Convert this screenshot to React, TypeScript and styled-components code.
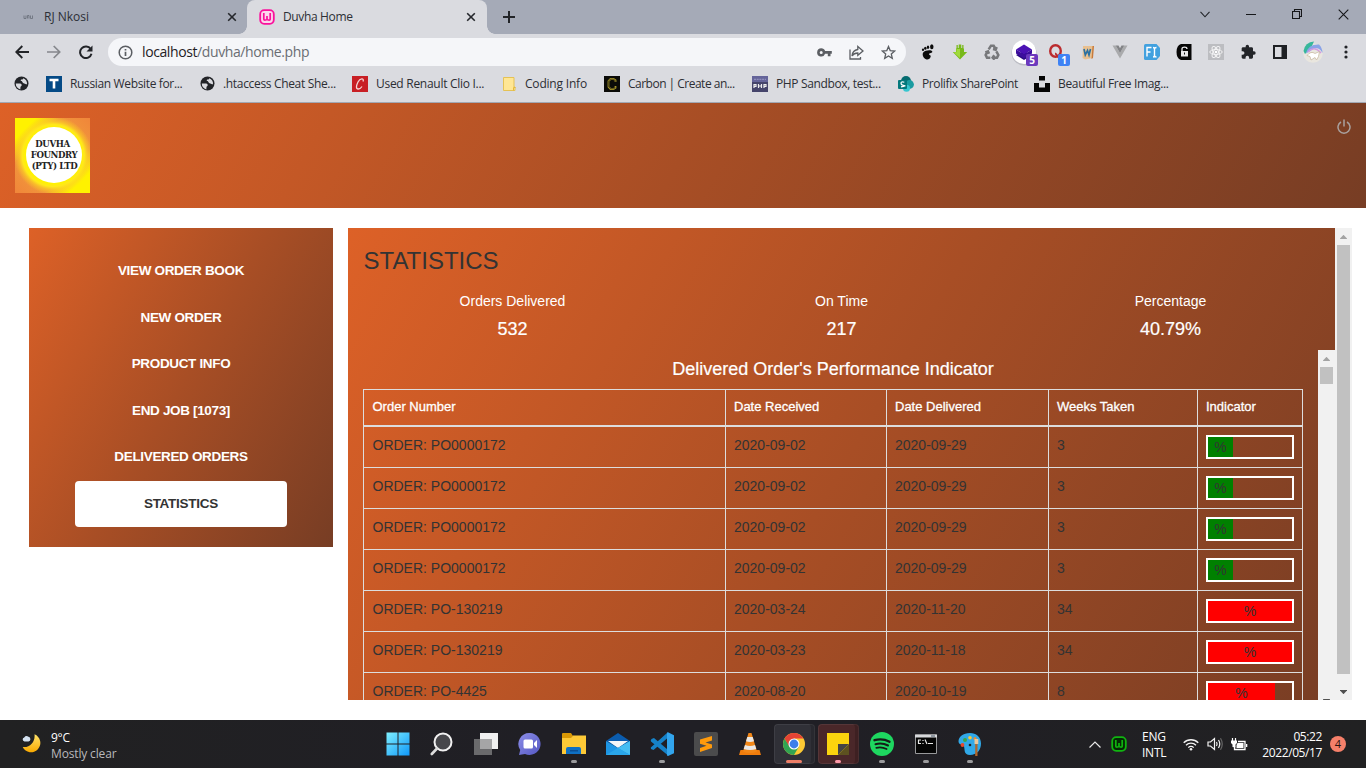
import React from "react";
import styled, { createGlobalStyle } from "styled-components";

const Global = createGlobalStyle`
  * { box-sizing: border-box; }
  body { margin: 0; background: #fff; overflow: hidden; }
  svg { display: block; flex: none; }
`;

const ui = `"Open Sans", "Noto Sans", sans-serif`;
const arial = `"Liberation Sans", Arial, sans-serif`;
const rust = `linear-gradient(120deg, #dd6127 0%, #a84e25 50%, #773d24 100%)`;

const Screen = styled.div`
  width: 1366px;
  height: 768px;
  display: flex;
  flex-direction: column;
  overflow: hidden;
`;

/* ---------- browser frame ---------- */
const TabStrip = styled.div`
  height: 34px;
  background: #a5aab7;
  display: flex;
  font: 12px/34px ${ui};
  color: #2c2f36;
`;
const Tab = styled.div<{ $active?: boolean; $w: number }>`
  position: relative;
  width: ${(p) => p.$w}px;
  height: 34px;
  display: flex;
  align-items: center;
  padding: 0 ${(p) => (p.$active ? 11 : 10)}px 0 ${(p) => (p.$active ? 12 : 20)}px;
  background: ${(p) => (p.$active ? "#dadbe0" : "transparent")};
  border-radius: 8px 8px 0 0;
  &::before,
  &::after {
    content: "";
    display: ${(p) => (p.$active ? "block" : "none")};
    position: absolute;
    bottom: 0;
    width: 8px;
    height: 8px;
  }
  &::before {
    left: -8px;
    background: radial-gradient(circle at 0 0, transparent 7.5px, #dadbe0 8px);
  }
  &::after {
    right: -8px;
    background: radial-gradient(circle at 100% 0, transparent 7.5px, #dadbe0 8px);
  }
`;
const TabTitle = styled.span<{ $s?: number }>`
  flex: 1;
  margin-left: 8px;
  letter-spacing: ${(p) => p.$s ?? 0}px;
  white-space: nowrap;
`;
const NewTab = styled.div`
  width: 44px;
  display: flex;
  align-items: center;
  justify-content: center;
`;
const WindowButtons = styled.div`
  margin-left: auto;
  display: flex;
  height: 28px;
`;
const WindowButton = styled.div<{ $w: number }>`
  width: ${(p) => p.$w}px;
  display: flex;
  align-items: center;
  justify-content: center;
`;

const Toolbar = styled.div`
  height: 37px;
  background: #dadbe0;
  display: flex;
  align-items: center;
  padding: 0 5px 1px 6px;
`;
const ToolCell = styled.div<{ $w?: number }>`
  position: relative;
  width: ${(p) => p.$w ?? 32}px;
  height: 32px;
  display: flex;
  align-items: center;
  justify-content: center;
  flex: none;
`;
const AddressBar = styled.div`
  flex: 1;
  height: 28px;
  margin: 0 6px 0 6px;
  border-radius: 14px;
  background: #f5f6f9;
  display: flex;
  align-items: center;
  padding: 0 2px 0 10px;
`;
const Url = styled.div`
  flex: 1;
  margin-left: 9px;
  font: 14px/28px ${ui};
  letter-spacing: -0.4px;
  color: #6a6d73;
  b {
    font-weight: 400;
    color: #1f2125;
  }
`;
const CountBadge = styled.span<{ $c: string }>`
  position: absolute;
  right: 2px;
  bottom: 2px;
  width: 12px;
  height: 12px;
  border-radius: 2px;
  background: ${(p) => p.$c};
  color: #fff;
  font: 700 10px/12px ${ui};
  text-align: center;
`;

const Bookmarks = styled.div`
  height: 32px;
  background: #dadbe0;
  border-bottom: 1px solid #a2a8b3;
  padding: 0 0 6px 14px;
  display: flex;
  align-items: center;
`;
const Bookmark = styled.div<{ $w: number; $s?: number }>`
  width: ${(p) => p.$w}px;
  display: flex;
  align-items: center;
  gap: 8px;
  flex: none;
  white-space: nowrap;
  font: 12px/26px ${ui};
  letter-spacing: ${(p) => p.$s ?? -0.2}px;
  color: #2c2e34;
`;

/* ---------- web page ---------- */
const SiteHeader = styled.header`
  height: 105px;
  background: ${rust};
  padding: 15px;
  display: flex;
  justify-content: space-between;
`;
const Logo = styled.div`
  width: 75px;
  height: 75px;
  padding: 8.5px 8.5px 9px 11px;
  background:
    radial-gradient(circle at 51% 50%, #fff200 0 28px, #ffe81a 31px, rgba(255, 220, 30, 0.55) 34px, rgba(255, 190, 50, 0) 39px),
    linear-gradient(135deg, #fff200 14%, transparent 30%, transparent 70%, #fff200 86%),
    linear-gradient(45deg, #f0853a, #f2a93c 45%, #f2a93c 55%, #f0853a);
`;
const LogoDisc = styled.div`
  width: 56px;
  height: 56.5px;
  border-radius: 50%;
  background: #fff;
  display: flex;
  flex-direction: column;
  align-items: center;
  justify-content: center;
  font: 700 8.6px/10.8px "DejaVu Serif", serif;
  letter-spacing: -0.4px;
  color: #222;
  white-space: nowrap;
  padding-top: 1px;
`;
const LogoLine = styled.span<{ $dx?: number }>`
  margin-left: ${(p) => p.$dx ?? 0}px;
`;
const PageBody = styled.main`
  height: 512px;
  padding: 20px 14px 20px 29px;
  display: flex;
  gap: 15px;
  align-items: flex-start;
  background: #fff;
`;
const SideNav = styled.nav`
  width: 304px;
  height: 319px;
  padding: 20px 46px;
  background: ${rust};
  flex: none;
`;
const NavItem = styled.div<{ $active?: boolean }>`
  height: ${(p) => (p.$active ? 46 : 46.5)}px;
  border-radius: 4px;
  background: ${(p) => (p.$active ? "#fff" : "transparent")};
  color: ${(p) => (p.$active ? "#333" : "#fff")};
  font: 700 13.5px/45px ${arial};
  letter-spacing: ${(p) => (p.$active ? -0.25 : -0.34)}px;
  text-align: center;
`;
const Panel = styled.section`
  width: 1004px;
  height: 472px;
  display: flex;
  overflow: hidden;
`;
const PanelContent = styled.div`
  width: 987px;
  height: 482px;
  background: ${rust};
  flex: none;
  color: #333;
  font-family: ${arial};
`;
const Heading = styled.h1`
  margin: 0;
  padding: 20px 15px 0 15.5px;
  font: 400 24px/26px ${arial};
  height: 63px;
`;
const Figures = styled.div`
  display: grid;
  grid-template-columns: repeat(3, 1fr);
  height: 59px;
  color: #fff;
  text-align: center;
`;
const FigureLabel = styled.div`
  font-size: 14px;
  line-height: 20px;
`;
const FigureValue = styled.div`
  font-size: 18px;
  line-height: 20px;
  margin-top: 8px;
  -webkit-text-stroke: 0.2px #fff;
`;
const Scroller = styled.div`
  display: flex;
  height: 360px;
`;
const ScrollBody = styled.div`
  width: 970px;
  padding: 9px 15px 0;
  overflow: hidden;
`;
const TableTitle = styled.h2`
  margin: 0;
  height: 30px;
  font: 400 18px/20px ${arial};
  -webkit-text-stroke: 0.2px #fff;
  color: #fff;
  text-align: center;
`;
const Table = styled.div`
  border-top: 1px solid #ddd;
`;
const Row = styled.div<{ $head?: boolean }>`
  display: grid;
  grid-template-columns: 362px 161px 162px 149px 106px;
  height: ${(p) => (p.$head ? 37 : 41)}px;
  border-bottom: ${(p) => (p.$head ? 2 : 1)}px solid #ddd;
  font-size: ${(p) => (p.$head ? 13 : 14)}px;
  line-height: 20px;
  color: ${(p) => (p.$head ? "#fff" : "#333")};
  -webkit-text-stroke: ${(p) => (p.$head ? "0.3px #fff" : "0")};
`;
const Cell = styled.div<{ $head?: boolean }>`
  padding: ${(p) => (p.$head ? 7 : 8)}px 8px;
  border-left: 1px solid #ddd;
  &:first-child {
    padding-left: 8.5px;
  }
  &:last-child {
    border-right: 1px solid #ddd;
  }
`;
const Meter = styled.div`
  height: 24px;
  border: 2px solid #fff;
`;
const MeterFill = styled.div<{ $late: boolean }>`
  height: 20px;
  background: ${(p) => (p.$late ? "#f00" : "#008000")};
  text-align: center;
  line-height: 21px;
`;
const Track = styled.div<{ $h: number }>`
  width: 17px;
  height: ${(p) => p.$h}px;
  flex: none;
  background: #f1f1f1;
  display: flex;
  flex-direction: column;
  align-items: center;
`;
const ArrowBox = styled.div`
  height: 17px;
  display: flex;
  align-items: center;
  flex: none;
`;
const Thumb = styled.div<{ $h: number }>`
  width: 13px;
  height: ${(p) => p.$h}px;
  background: #c1c1c1;
`;
const Spacer = styled.div`
  flex: 1;
`;

/* ---------- taskbar ---------- */
const Taskbar = styled.footer`
  height: 48px;
  background: linear-gradient(90deg, #212122, #201f25 40%, #201f25 60%, #212122);
  display: flex;
  color: #fff;
  font: 12px/16px ${ui};
`;
const Weather = styled.div`
  width: 375px;
  padding: 9px 0 0 20px;
  display: flex;
  gap: 9px;
`;
const WeatherIcon = styled.div`
  padding-top: 3px;
`;
const WeatherText = styled.div`
  padding-top: 1px;
  letter-spacing: -0.25px;
  span {
    display: block;
    color: #b9b9bb;
    letter-spacing: -0.15px;
  }
`;
const Apps = styled.div`
  display: flex;
  padding-left: 0.5px;
`;
const AppButton = styled.div<{ $bg?: string }>`
  position: relative;
  width: 44px;
  height: 48px;
  display: flex;
  align-items: center;
  justify-content: center;
  &::before {
    content: "";
    position: absolute;
    inset: 4px 1px 4px 2px;
    border-radius: 4px;
    background: ${(p) => p.$bg ?? "transparent"};
    box-shadow: ${(p) => (p.$bg ? "inset -5px 0 0 -1px rgba(0,0,0,.16), inset 0 0 0 1px rgba(255,255,255,.07)" : "none")};
  }
  svg {
    position: relative;
  }
`;
const Running = styled.i<{ $w: number; $c: string }>`
  position: absolute;
  bottom: 5px;
  left: calc(50% - ${(p) => p.$w / 2}px);
  width: ${(p) => p.$w}px;
  height: 3px;
  border-radius: 2px;
  background: ${(p) => p.$c};
`;
const Tray = styled.div`
  margin-left: auto;
  display: flex;
  align-items: center;
  padding-right: 20px;
`;
const TrayCell = styled.div<{ $w: number }>`
  width: ${(p) => p.$w}px;
  display: flex;
  justify-content: center;
`;
const TrayText = styled.div<{ $w: number; $right?: boolean; $s?: number }>`
  width: ${(p) => p.$w}px;
  text-align: ${(p) => (p.$right ? "right" : "left")};
  letter-spacing: ${(p) => p.$s ?? 0}px;
  white-space: nowrap;
  line-height: 16px;
  padding-top: 1px;
`;
const Notice = styled.div`
  width: 16px;
  height: 16px;
  margin-left: 8px;
  border-radius: 50%;
  background: #f6806a;
  color: #2a1512;
  font-size: 11px;
  line-height: 16px;
  text-align: center;
`;

/* ---------- icons ---------- */
const Cross = () => (
  <svg width="10" height="10" viewBox="0 0 10 10" stroke="#25272c" strokeWidth="1.6"><path d="M1.2 1.2l7.6 7.6M8.8 1.2L1.2 8.8" /></svg>
);
const GlobeIcon = () => (
  <svg width="15" height="15" viewBox="0 0 15 15"><circle cx="7.5" cy="7.5" r="7" fill="#222428" /><path d="M1.8 7.600h4.400q1.600.2 1.500 1.600c-.1 1-1 1-1.200 1.800l-.2 2.400C3.600 12.800 1.700 10.700 1.800 7.600zM9.300 2.200q-.2 1.300-1.200 1.400c-1.300.1-1.400.3-1.300 1.200.1.700 1.300.5 1.600 1.200.3.900.9 1.400 1.900 1.400s1.200.9 2.700.9C13.400 5.500 11.700 3 9.300 2.200z" fill="#dadbe0" /></svg>
);
const WampIcon = ({ c, s = 16, bg = "none" }: { c: string; s?: number; bg?: string }) => (
  <svg width={s} height={s} viewBox="0 0 16 16" fill={bg} stroke={c}><rect x="1.200" y="1.200" width="13.600" height="13.600" rx="4" strokeWidth="1.800" /><path d="M4.800 4v6.200c0 1.200 2.200 1.200 2.200 0M11.200 4v6.200c0 1.200-2.200 1.200-2.200 0M8 7v4.500" fill="none" strokeWidth="1.700" /></svg>
);
const Arrow = ({ down, c = "#a3a3a3" }: { down?: boolean; c?: string }) => (
  <svg width="7" height="4" viewBox="0 0 7 4" fill={c}><path d={down ? "M0 0h7v.5L3.700 4h-.4L0 .5z" : "M0 4h7v-.5L3.700 0h-.4L0 3.500z"} /></svg>
);

const Extensions = () => (
  <>
    <ToolCell><svg width="14" height="16" viewBox="0 0 14 16" fill="#0b0b0b"><path d="M2.200 8.500C4 6 10.500 5.300 11.300 7.500c.5 1.700-3.500 1.400-3.300 2.700.1 1 2 .6 1.700 2.300C9.300 14.800 7 16 5 15.300 2.300 14.300.9 10.500 2.200 8.500z" /><ellipse cx="2" cy="5.800" rx="1.100" ry="1.300" /><ellipse cx="4.300" cy="4.200" rx="1.200" ry="1.500" /><ellipse cx="7" cy="3.300" rx="1.200" ry="1.700" /><ellipse cx="10.800" cy="2.700" rx="1.700" ry="2.500" /></svg></ToolCell>
    <ToolCell><svg width="16" height="16" viewBox="0 0 16 16"><path d="M4.500 1v3.500H4V8H.8L8 15.500 15.200 8H12V4.500h-.5V1h-1.300v3H9.300V.5H6.700V4h-.900V1z" fill="#78b91a" /><path d="M4.500 5h3.500v9L1.500 8.300h3z" fill="#a1da3c" /></svg></ToolCell>
    <ToolCell><svg width="16" height="16" viewBox="0 0 24 24" fill="none" stroke="#77787b" strokeWidth="3.800"><path d="M7 8l3.500-5.500h4L17 7M19 4.500l-1.500 4-4-1M18.500 11l3 5.500-2 4H14M15.500 17l-2.500 3.500 3 3M9.500 20.500H4.500l-2-4L5 11.500M2 12.500l4-1.500 1.500 3.500" /></svg></ToolCell>
    <ToolCell><svg width="30" height="30" viewBox="0 0 30 30"><circle cx="15" cy="16" r="12.500" fill="#9da0a8" opacity=".5" /><circle cx="15" cy="15" r="12" fill="#fff" /><path d="M15 10l8 4-8 5-8-5z" transform="translate(0 4)" fill="#2a0a80" /><path d="M15 7.500l8 5-8 5-8-5z" fill="#4b12b4" /><path d="M7 12.500l8 5 8-5v4l-8 5-8-5z" fill="#3c0e9d" /></svg><CountBadge $c="#6b39bd">5</CountBadge></ToolCell>
    <ToolCell><svg width="17" height="17" viewBox="0 0 17 17" fill="none" stroke="#bb2b2e"><ellipse cx="7.500" cy="7" rx="5.300" ry="5.800" strokeWidth="2.400" /><path d="M7 9.500c2 0 3 5.500 6 5" strokeWidth="2" /></svg><CountBadge $c="#3e82f4">1</CountBadge></ToolCell>
    <ToolCell><svg width="14" height="15" viewBox="0 0 14 15"><path d="M2 1h10.500l-.8 12L4 14.500 1.500 13z" fill="#e9c08f" /><path d="M11.500 1h1.500l-1 12-1.500 1z" fill="#c77a3c" /><path d="M3 4l1.300 6L6.500 5.500 8 10 9.500 4" fill="none" stroke="#2a70a2" strokeWidth="1.700" /></svg></ToolCell>
    <ToolCell><svg width="16" height="14" viewBox="0 0 16 14"><path d="M.5.5h3.200L8 8 12.300.5h3.200L8 13.500z" fill="#a9aaac" /><path d="M3.700.5h2.800L8 3.200 9.500.5h2.800L8 8z" fill="#828386" /></svg></ToolCell>
    <ToolCell><svg width="16" height="16" viewBox="0 0 16 16"><path d="M1.500 0h11L16 4v8l-3.500 4h-11Q0 16 0 14.500v-13Q0 0 1.500 0z" fill="#42a1df" /><path d="M3 12.500v-9h4.500M3 8h3.500M9 3.500q1.500 0 1.500 1.500v6.500q0 1.500-1.500 1.500M12.500 3.500q-2 0-2 1.500M12.500 13q-2 0-2-1.500" fill="none" stroke="#fff" strokeWidth="1.400" /></svg></ToolCell>
    <ToolCell><svg width="16" height="16" viewBox="0 0 16 16"><path d="M5 0h10.500v16H5Q.5 14.500.5 8T5 0z" fill="#060606" /><rect x="5" y="7" width="7" height="5.500" fill="#e7e7e9" /><path d="M6 7V4.700q0-1.500 2.500-1.500T11 5" fill="none" stroke="#e7e7e9" strokeWidth="1.300" /><path d="M8.500 8.500v2" stroke="#111" /></svg></ToolCell>
    <ToolCell><svg width="16" height="16" viewBox="0 0 16 16"><rect width="16" height="16" fill="#bcbdc1" /><g fill="none" stroke="#f3f3f4"><ellipse cx="8" cy="8" rx="6.200" ry="2.500" /><ellipse cx="8" cy="8" rx="6.200" ry="2.500" transform="rotate(60 8 8)" /><ellipse cx="8" cy="8" rx="6.200" ry="2.500" transform="rotate(120 8 8)" /></g><circle cx="8" cy="8" r="1.300" fill="#fff" /></svg></ToolCell>
    <ToolCell><svg width="16" height="16" viewBox="0 0 24 24" fill="#222428"><path d="M21 11h-1.500V7c0-1.100-.9-2-2-2h-4V3.500a2.500 2.500 0 0 0-5 0V5h-4c-1.100 0-2 .9-2 2v3.800H4a2.700 2.700 0 0 1 0 5.400H2.500V20c0 1.100.9 2 2 2h3.800v-1.500a2.700 2.700 0 0 1 5.400 0V22h3.800c1.100 0 2-.9 2-2v-4H21a2.500 2.500 0 0 0 0-5z" /></svg></ToolCell>
    <ToolCell><svg width="14" height="14" viewBox="0 0 14 14"><path d="M1 1h12v12H1z" fill="none" stroke="#1e2024" strokeWidth="2" /><path d="M8.500 0H14v14H8.500z" fill="#1e2024" /></svg></ToolCell>
    <ToolCell $w={34}><svg width="22" height="24" viewBox="0 0 22 24"><circle cx="11" cy="13" r="9.800" fill="#e9e6df" /><path d="M1.500 11Q3 2 12 1.500L9 8l-6 6z" fill="#37b79b" /><path d="M4 13.500Q6 4 17 4.500q3.500 3.500 3.500 8.500-3-6-8-4.500z" fill="#8aa3e8" /><path d="M6 12q6-7 13 1" fill="none" stroke="#d39be0" strokeWidth="1.500" /><path d="M5 15.500q4-5 8-2l4.500-2-1 5-2 3.500-1.500-2.500-4 2.500-1-3.500z" fill="#fff" stroke="#c6b59a" strokeWidth=".7" /></svg></ToolCell>
    <ToolCell $w={31}><svg width="4" height="14" viewBox="0 0 4 14" fill="#222428"><circle cx="2" cy="2" r="1.600" /><circle cx="2" cy="7" r="1.600" /><circle cx="2" cy="12" r="1.600" /></svg></ToolCell>
  </>
);

const BrowserFrame = () => (
  <>
    <TabStrip>
      <Tab $w={247}>
        <svg width="16" height="16" viewBox="0 0 16 16" fill="none" stroke="#646974"><path d="M4 6.500v3h2v-3M7.500 9.500v-3H9v3M10.500 6.500v3h2v-3" opacity=".75" /></svg>
        <TabTitle $s={0}>RJ Nkosi</TabTitle>
        <Cross />
      </Tab>
      <Tab $w={240} $active>
        <WampIcon c="#fa119c" bg="#fcd7ec" />
        <TabTitle $s={-0.36}>Duvha Home</TabTitle>
        <Cross />
      </Tab>
      <NewTab><svg width="12" height="12" viewBox="0 0 12 12" stroke="#222428" strokeWidth="2"><path d="M6 0v12M0 6h12" /></svg></NewTab>
      <WindowButtons>
        <WindowButton $w={46}><svg width="10" height="7" viewBox="0 0 10 7" fill="none" stroke="#222428" strokeWidth="1.100"><path d="M.5.800L5 5.800 9.500.8" /></svg></WindowButton>
        <WindowButton $w={46}><svg width="10" height="2" viewBox="0 0 10 2"><path d="M0 1h10v1H0z" fill="#16171a" /></svg></WindowButton>
        <WindowButton $w={46}><svg width="10" height="10" viewBox="0 0 10 10" fill="none" stroke="#16171a" strokeWidth="1.100"><path d="M.5 2.500h7v7h-7zM2.500 2.500v-2h7v7h-2" /></svg></WindowButton>
        <WindowButton $w={46}><svg width="11" height="11" viewBox="0 0 11 11" stroke="#16171a" strokeWidth="1.100"><path d="M.7.7l9.600 9.600M10.300.7L.7 10.300" /></svg></WindowButton>
      </WindowButtons>
    </TabStrip>
    <Toolbar>
      <ToolCell><svg width="14" height="14" viewBox="0 0 14 14" fill="none" stroke="#222428" strokeWidth="1.900"><path d="M14 7H1.500M7.300 1L1.300 7l6 6" /></svg></ToolCell>
      <ToolCell><svg width="14" height="14" viewBox="0 0 14 14" fill="none" stroke="#85878c" strokeWidth="1.700"><path d="M0 7h12.500M6.700 1l6 6-6 6" /></svg></ToolCell>
      <ToolCell><svg width="14" height="14" viewBox="0 0 14 14"><path d="M11.700 4A5.800 5.800 0 1 0 12.500 8.800" fill="none" stroke="#222428" strokeWidth="2" /><path d="M13.500.5v6h-6z" fill="#222428" /></svg></ToolCell>
      <AddressBar>
        <svg width="15" height="15" viewBox="0 0 15 15" fill="none" stroke="#5b5e63" strokeWidth="1.500"><circle cx="7.500" cy="7.500" r="6.300" /><path d="M7.500 6.700v4.200M7.500 4v1.600" strokeWidth="1.700" /></svg>
        <Url><b>localhost</b>/duvha/home.php</Url>
        <ToolCell><svg width="15" height="9" viewBox="0 0 15 9" fill="#5b5e63"><path fillRule="evenodd" d="M4.200.300a4.100 4.100 0 0 1 3.900 2.800H14.800v2.700H13.500V8.300h-2.700V5.800H8.100A4.100 4.100 0 1 1 4.200.3zm0 2.700a1.500 1.500 0 1 0 0 3 1.500 1.500 0 0 0 0-3z" /></svg></ToolCell>
        <ToolCell><svg width="15" height="15" viewBox="0 0 15 15" fill="none" stroke="#5b5e63" strokeWidth="1.300"><path d="M1 4.500V14h10.500v-2M8.800 1.500L14 6 8.800 10.300V8C6 8 4.300 9 3 11c.3-3.500 2.300-6 5.800-6.500z" /></svg></ToolCell>
        <ToolCell><svg width="15" height="15" viewBox="0 0 15 15" fill="none" stroke="#5b5e63" strokeWidth="1.300"><path d="M7.500 1.500l1.700 4.100 4.500.4-3.400 2.900 1 4.400-3.800-2.300-3.800 2.300 1-4.400L1.300 6l4.500-.4z" /></svg></ToolCell>
      </AddressBar>
      <Extensions />
    </Toolbar>
    <Bookmarks>
      <Bookmark $w={32}><GlobeIcon /></Bookmark>
      <Bookmark $w={154} $s={-0.35}><svg width="16" height="16" viewBox="0 0 16 16"><path d="M0 0h16v16H0z" fill="#044a86" /><path d="M3.500 4h9M8 4v8.500" stroke="#fff" strokeWidth="2.600" /></svg>Russian Website for...</Bookmark>
      <Bookmark $w={152} $s={-0.33}><GlobeIcon />.htaccess Cheat She...</Bookmark>
      <Bookmark $w={149} $s={-0.28}><svg width="16" height="16" viewBox="0 0 16 16"><path d="M0 0h16v16H0z" fill="#c81f25" /><path d="M11 5.500c1.500-3.500-3-3.500-5 .5s-2.200 7 .3 7c1.500 0 2.700-1 3.700-2.500" fill="none" stroke="#f4d5d5" strokeWidth="1.300" /></svg>Used Renault Clio I...</Bookmark>
      <Bookmark $w={103} $s={-0.2}><svg width="16" height="16" viewBox="0 0 16 16"><path d="M2.500 1.500h10.500v9.500h1v3.500H2.500z" fill="#ffe694" stroke="#e5c255" /><path d="M12.500 14.500v-3h2" fill="none" stroke="#e5b93a" /></svg>Coding Info</Bookmark>
      <Bookmark $w={148} $s={-0.51}><svg width="16" height="16" viewBox="0 0 16 16"><path d="M0 0h16v16H0z" fill="#0b0b08" /><path d="M11.500 6V4.200L9.500 3h-3L4.500 5v6l2 2h3l2-1.200V10" fill="none" stroke="#aa992b" strokeWidth="1.800" /><path d="M11.300 5.800V4.600L9.300 3.200h-3L4.700 5v5.700l1.800 2h3l1.800-1" fill="none" stroke="#0b0b08" strokeWidth=".6" /></svg>Carbon | Create an...</Bookmark>
      <Bookmark $w={146} $s={-0.36}><svg width="16" height="16" viewBox="0 0 16 16"><path d="M0 0h16v16H0z" fill="#45446b" /><path d="M0 0h16v6H0z" fill="#65649a" /><path d="M2 3.300h12" stroke="#9a99c4" strokeDasharray="2 .7" /><path d="M2 12V8.500h2v1.800H2M6.500 8v4M9.500 8v4M6.500 10h3M12 12V8.500h2v1.800h-2" fill="none" stroke="#eee" strokeWidth="1.200" /></svg>PHP Sandbox, test...</Bookmark>
      <Bookmark $w={136} $s={-0.38}><svg width="16" height="16" viewBox="0 0 16 16"><circle cx="8" cy="5" r="5" fill="#056c70" /><circle cx="11.500" cy="8.500" r="4.400" fill="#1a9ba1" /><circle cx="8.500" cy="12.300" r="3.500" fill="#37c6d0" /><rect x="0" y="4" width="9" height="9" rx="1" fill="#03787c" /><path d="M6.300 6.300Q3 5.300 3 7.200T6 9.500 3 10.800" fill="none" stroke="#fff" strokeWidth="1.200" /></svg>Prolifix SharePoint</Bookmark>
      <Bookmark $w={160} $s={-0.34}><svg width="16" height="16" viewBox="0 0 16 16"><path d="M5 0h6v4.500H5zM0 7h5v4.500h6V7h5v9H0z" fill="#050505" /></svg>Beautiful Free Imag...</Bookmark>
    </Bookmarks>
  </>
);

const navItems = ["VIEW ORDER BOOK", "NEW ORDER", "PRODUCT INFO", "END JOB [1073]", "DELIVERED ORDERS"];

type Order = { no: string; received: string; delivered: string; weeks: number; fill: number };
const early: Order = { no: "PO0000172", received: "2020-09-02", delivered: "2020-09-29", weeks: 3, fill: 30 };
const orders: Order[] = [
  early,
  early,
  early,
  early,
  { no: "PO-130219", received: "2020-03-24", delivered: "2020-11-20", weeks: 34, fill: 100 },
  { no: "PO-130219", received: "2020-03-23", delivered: "2020-11-18", weeks: 34, fill: 100 },
  { no: "PO-4425", received: "2020-08-20", delivered: "2020-10-19", weeks: 8, fill: 80 },
];

const Site = () => (
  <>
    <SiteHeader>
      <Logo>
        <LogoDisc>
          <LogoLine $dx={-3}>DUVHA</LogoLine>
          <LogoLine>FOUNDRY</LogoLine>
          <LogoLine $dx={1}>(PTY) LTD</LogoLine>
        </LogoDisc>
      </Logo>
      <svg width="14" height="18" viewBox="0 0 14 18" fill="none" stroke="#a9a19f" strokeWidth="1.500"><path d="M4 4a6 6 0 1 0 6 0M7 1.500v7" /></svg>
    </SiteHeader>
    <PageBody>
      <SideNav>
        {navItems.map((label) => <NavItem key={label}>{label}</NavItem>)}
        <NavItem $active>STATISTICS</NavItem>
      </SideNav>
      <Panel>
        <PanelContent>
          <Heading>STATISTICS</Heading>
          <Figures>
            <div><FigureLabel>Orders Delivered</FigureLabel><FigureValue>532</FigureValue></div>
            <div><FigureLabel>On Time</FigureLabel><FigureValue>217</FigureValue></div>
            <div><FigureLabel>Percentage</FigureLabel><FigureValue>40.79%</FigureValue></div>
          </Figures>
          <Scroller>
            <ScrollBody>
              <TableTitle>Delivered Order's Performance Indicator</TableTitle>
              <Table>
                <Row $head>
                  {["Order Number", "Date Received", "Date Delivered", "Weeks Taken", "Indicator"].map((h) => <Cell $head key={h}>{h}</Cell>)}
                </Row>
                {orders.map((o, i) => (
                  <Row key={i}>
                    <Cell>ORDER: {o.no}</Cell>
                    <Cell>{o.received}</Cell>
                    <Cell>{o.delivered}</Cell>
                    <Cell>{o.weeks}</Cell>
                    <Cell><Meter><MeterFill $late={o.weeks > 6} style={{ width: `${o.fill}%` }}>%</MeterFill></Meter></Cell>
                  </Row>
                ))}
              </Table>
            </ScrollBody>
            <Track $h={359}>
              <ArrowBox><Arrow /></ArrowBox>
              <Thumb $h={17} />
              <Spacer />
              <ArrowBox><Arrow down c="#505050" /></ArrowBox>
            </Track>
          </Scroller>
        </PanelContent>
        <Track $h={472}>
          <ArrowBox><Arrow /></ArrowBox>
          <Thumb $h={429} />
          <Spacer />
          <ArrowBox><Arrow down c="#505050" /></ArrowBox>
        </Track>
      </Panel>
    </PageBody>
  </>
);

const Bar = () => (
  <Taskbar>
    <Weather>
      <WeatherIcon>
        <svg width="22" height="22" viewBox="0 0 22 22"><defs><linearGradient id="moon" x1="0" y1="0" x2="0" y2="1"><stop offset="0" stopColor="#ffe36a" /><stop offset="1" stopColor="#f9a900" /></linearGradient></defs><path d="M14.500 4.800a9.300 9.300 0 1 1-11.800 12.700C10 18.500 15.500 12 14.500 4.800z" transform="translate(0 -2.500)" fill="url(#moon)" /><path d="M4.500 9.500a2.100 2.100 0 0 1-.3-4.100A3 3 0 0 1 8.500 4.800 2.400 2.400 0 0 1 8.500 9.500z" fill="#d4e2f1" /></svg>
      </WeatherIcon>
      <WeatherText>9°C<span>Mostly clear</span></WeatherText>
    </Weather>
    <Apps>
      <AppButton><svg width="24" height="24" viewBox="0 0 24 24"><defs><linearGradient id="win" x1="0" y1="0" x2="1" y2="1"><stop stopColor="#7ff0ff" /><stop offset="1" stopColor="#0f97f8" /></linearGradient></defs><path d="M.5.500h11v11H.5zM12.500.5h11v11h-11zM.5 12.500h11v11H.5zM12.500 12.500h11v11h-11z" fill="url(#win)" /></svg></AppButton>
      <AppButton><svg width="24" height="24" viewBox="0 0 24 24"><circle cx="13" cy="10" r="8.500" fill="#47474b" stroke="#f1f1f1" strokeWidth="2" /><path d="M7 16.500L1.800 22" stroke="#dcdcdc" strokeWidth="2.600" strokeLinecap="round" /></svg></AppButton>
      <AppButton><svg width="24" height="24" viewBox="0 0 24 24"><path d="M6 1h18v16H6z" fill="#f0f0f0" /><path d="M0 7h18v16H0z" fill="#6a6a6c" /><path d="M6 7h12v10H6z" fill="#a5a5a6" /></svg></AppButton>
      <AppButton><svg width="24" height="24" viewBox="0 0 24 24"><defs><linearGradient id="chat" x1="0" y1="0" x2="1" y2="1"><stop stopColor="#8c8ee8" /><stop offset="1" stopColor="#5557c2" /></linearGradient></defs><path d="M12 1a11 11 0 1 1-5 21L1 23l1.200-5A11 11 0 0 1 12 1z" fill="url(#chat)" /><rect x="5.500" y="7.500" width="9.500" height="9" rx="1.500" fill="#fff" /><path d="M16 11l3-3v8l-3-3z" fill="#fff" /></svg></AppButton>
      <AppButton><svg width="24" height="24" viewBox="0 0 24 24"><path d="M0 2q0-1 1-1h8l2 3-2 3H0z" fill="#d99805" /><path d="M0 6h9l2-2.500h13V22H0z" fill="#fdc937" /><path d="M4 22v-5q0-2 2-2h11q2 0 2 2v5z" fill="#0f70c4" /><path d="M8 18h8v1.500H8z" fill="#0a4f96" /></svg><Running $w={6} $c="#9b9b9d" /></AppButton>
      <AppButton><svg width="24" height="24" viewBox="0 0 24 24"><path d="M0 9L12 1l12 8-12 7z" fill="#0b5cae" /><path d="M2 9h20L12 16z" fill="#f3f5f8" /><path d="M0 9l12 7 12-7v14H0z" fill="#1d95e4" /><path d="M12 16l12-7v14z" fill="#45bdf2" /><path d="M0 23l12-7 12 7z" fill="#2aa6ea" /></svg></AppButton>
      <AppButton><svg width="24" height="24" viewBox="0 0 24 24"><path d="M1.500 7L4 6l13.500 11.500V23L1 9.500q-.8-1 .5-2.500zM.8 15.500L17 1v5.500L3.500 18 1 17z" fill="#1682c9" /><path d="M17 .5l1-.3 6 3v18L18 24l-1-.5z" fill="#32a5ee" /></svg><Running $w={6} $c="#9b9b9d" /></AppButton>
      <AppButton><svg width="24" height="24" viewBox="0 0 24 24"><rect width="24" height="24" rx="2" fill="#4b4b4c" /><path d="M6 7.500L18 4v4.500l-6.500 2L18 12.500V16L6 20v-4l6.500-2.200L6 11.800z" fill="#ff9a0c" /></svg></AppButton>
      <AppButton><svg width="22" height="24" viewBox="0 0 22 24"><path d="M1.500 18h19l1.500 5H0z" fill="#f07c0c" /><path d="M9.500 1h3L18 19.500q-7 3-14 0z" fill="#f28717" /><path d="M8.300 5h5.400l1.300 4.300q-4 1.500-8 0zM6 13q5 1.800 10 0l1.300 4q-6.300 2-12.600 0z" fill="#e9e7e5" /></svg></AppButton>
      <AppButton $bg="#303037"><svg width="24" height="24" viewBox="0 0 24 24"><circle cx="12" cy="12" r="11" fill="#fcc934" /><path d="M2.500 6.500A11 11 0 0 0 12 23l5-8.500-9 0z" fill="#31a452" /><path d="M12 6.500h9.500A11 11 0 0 0 2.500 6.500L7.300 14.500z" fill="#e54335" /><circle cx="12" cy="12" r="5.500" fill="#fff" /><circle cx="12" cy="12" r="4.400" fill="#3d7eea" /></svg><Running $w={16} $c="#ee7f68" /></AppButton>
      <AppButton $bg="#4a2729"><svg width="22" height="22" viewBox="0 0 22 22"><path d="M0 0h22v22H0z" fill="#fbd40e" /><path d="M11 22V11h11z" fill="#444" /><path d="M11 22l11-11v11z" fill="#5d5120" /></svg><Running $w={6} $c="#ff9aaa" /></AppButton>
      <AppButton><svg width="24" height="24" viewBox="0 0 24 24"><circle cx="12" cy="12" r="12" fill="#1ed760" /><g fill="none" stroke="#151c18" strokeLinecap="round"><path d="M4.500 8.200q8-2.200 15 1.500" strokeWidth="2.400" /><path d="M5.500 12.200q6.500-1.800 12.500 1.300" strokeWidth="2" /><path d="M6.300 15.800q5.500-1.300 10.300 1.300" strokeWidth="1.700" /></g></svg><Running $w={6} $c="#9b9b9d" /></AppButton>
      <AppButton><svg width="22" height="20" viewBox="0 0 22 20"><path d="M.5 1h21v18.500H.5z" fill="#050505" stroke="#98999b" /><path d="M0 .5h22v3H0z" fill="#d7d8db" /><path d="M16 2h4" stroke="#456" /><path d="M6 6H3.500v3.500H6M8 6v1M8 9v1M10 5.500l2 4.500M13 9.500h5" fill="none" stroke="#e8e8e8" strokeWidth="1.200" /></svg><Running $w={6} $c="#9b9b9d" /></AppButton>
      <AppButton><svg width="24" height="24" viewBox="0 0 24 24"><path d="M12 1C5 1 .5 5 .5 9.500c0 3.500 4.500 2.500 5.500 5 1 3-.5 8.500 6 8.500 7 0 11-5 11-11.500S18 1 12 1z" fill="#31a9e8" /><circle cx="7" cy="8" r="2" fill="#3aa64b" /><circle cx="12" cy="5.800" r="1.800" fill="#fbcb35" /><circle cx="17" cy="6.500" r="1.500" fill="#f28a2e" /><circle cx="4.500" cy="13" r="1.900" fill="#e8492c" /><circle cx="12" cy="13" r="1.300" fill="#202024" /><path d="M16.500 7h3.800v5h-3.800z" fill="#ecc79a" /><path d="M17.200 12h2.300v12h-2.300z" fill="#b0672c" /></svg><Running $w={6} $c="#9b9b9d" /></AppButton>
    </Apps>
    <Tray>
      <TrayCell $w={24}><svg width="12" height="7" viewBox="0 0 12 7" fill="none" stroke="#e9e9e9" strokeWidth="1.200"><path d="M.5 6.500L6 1l5.500 5.500" /></svg></TrayCell>
      <TrayCell $w={24}><WampIcon c="#10b410" bg="#052805" /></TrayCell>
      <TrayCell $w={11} />
      <TrayText $w={37} $s={-0.25}>ENG<br />INTL</TrayText>
      <TrayCell $w={24}><svg width="16" height="13" viewBox="0 0 16 13" fill="none" stroke="#f2f2f2" strokeWidth="1.300"><path d="M.7 4.800a10.300 10.300 0 0 1 14.600 0M3 7.300a7 7 0 0 1 10 0M5.300 9.600a3.800 3.800 0 0 1 5.400 0" /><circle cx="8" cy="11.300" r="1.300" fill="#f2f2f2" stroke="none" /></svg></TrayCell>
      <TrayCell $w={24}><svg width="17" height="14" viewBox="0 0 17 14" fill="none" stroke="#f2f2f2" strokeWidth="1.200"><path d="M1 5v4h2.500L7.500 12.500v-11L3.500 5zM9.500 5q1.200 2 0 4M11.500 3q2.500 4 0 8" /><path d="M13.500 1.300q3.500 5.700 0 11.400" stroke="#666" /></svg></TrayCell>
      <TrayCell $w={25}><svg width="17" height="13" viewBox="0 0 17 13"><path d="M1.500 0v3M4.500 0v3" stroke="#fff" strokeWidth="1.200" /><path d="M0 2.500h6V5L4.500 6.500v3l-3-.5V6.500L0 5z" fill="#fff" /><path d="M7 3.500h7v8H3.500V8" fill="none" stroke="#fff" strokeWidth="1.300" /><path d="M6.500 5h6v5h-7V7z" fill="#fff" /><path d="M15 6h1.300v3H15z" fill="#fff" /></svg></TrayCell>
      <TrayText $w={70} $right $s={-0.4}>05:22<br />2022/05/17</TrayText>
      <Notice>4</Notice>
    </Tray>
  </Taskbar>
);

export default function App() {
  return (
    <Screen>
      <Global />
      <BrowserFrame />
      <Site />
      <Bar />
    </Screen>
  );
}
